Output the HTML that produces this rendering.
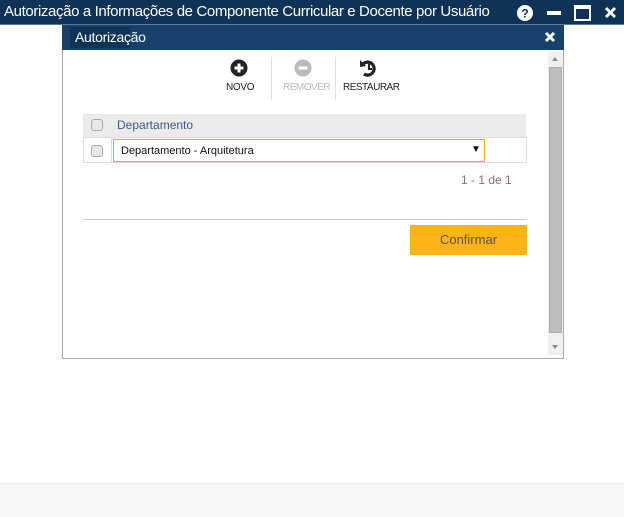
<!DOCTYPE html>
<html><head><meta charset="utf-8"><style>
*{margin:0;padding:0;box-sizing:border-box}
body{width:624px;height:517px;position:relative;background:#fff;font-family:"Liberation Sans",sans-serif;overflow:hidden}
.a{position:absolute}
</style></head><body>
<div class="a" style="left:0;top:0;width:624px;height:25px;background:#0f3357;border-bottom:1px solid #5b7a99"></div>
<div class="a" style="left:4px;top:3px;color:#fff;font-size:15px;letter-spacing:-0.38px">Autorização a Informações de Componente Curricular e Docente por Usuário</div>
<svg class="a" style="left:514px;top:4px" width="110" height="18">
<circle cx="11" cy="9" r="8" fill="#fff"/><text x="11" y="13.5" font-size="12" font-weight="bold" fill="#0f3357" text-anchor="middle" font-family="Liberation Sans">?</text>
<rect x="33" y="7" width="14" height="4" fill="#fff"/>
<rect x="61" y="2" width="15" height="14" fill="none" stroke="#fff" stroke-width="2"/><rect x="61" y="2" width="15" height="3" fill="#fff"/>
<path d="M92 4 L101 13 M101 4 L92 13" stroke="#fff" stroke-width="3"/>
</svg>
<div class="a" style="left:62px;top:25px;width:502px;height:334px;border:1px solid #aaa;background:#fff"></div>
<div class="a" style="left:62px;top:25px;width:502px;height:25px;background:#17406b"></div>
<div class="a" style="left:70px;top:27px;width:60px;height:21px;background:#0f3357"></div>
<div class="a" style="left:75px;top:29px;color:#fff;font-size:14px;letter-spacing:-0.3px">Autorização</div>
<svg class="a" style="left:544px;top:31px" width="12" height="12"><path d="M2 2 L10 10 M10 2 L2 10" stroke="#fff" stroke-width="3"/></svg>
<div class="a" style="left:548px;top:52px;width:15px;height:303px;background:#f0f0f0"></div>
<div class="a" style="left:549px;top:67px;width:13px;height:266px;background:#bdbdbd;border:1px solid #aaa"></div>
<svg class="a" style="left:550px;top:55px" width="10" height="300"><path d="M2 6 L8 6 L5 2Z M2 290 L8 290 L5 294Z" fill="#888"/></svg>
<svg class="a" style="left:229px;top:58px" width="160" height="22">
<circle cx="10" cy="10" r="8.5" fill="#222"/><path d="M10 5.5V14.5M5.5 10H14.5" stroke="#fff" stroke-width="3"/>
<circle cx="74" cy="10" r="8.5" fill="#bbb"/><path d="M69.5 10H78.5" stroke="#fff" stroke-width="3"/>
<path d="M134 6 A6.5 6.5 0 1 1 135 16" fill="none" stroke="#222" stroke-width="3.2"/><path d="M131 2 L137 8 L131 9Z" fill="#222"/><path d="M140 6V11H143" fill="none" stroke="#222" stroke-width="2"/>
</svg>
<div class="a" style="left:271px;top:57px;width:1px;height:43px;background:#ddd"></div>
<div class="a" style="left:335px;top:57px;width:1px;height:43px;background:#ddd"></div>
<div class="a" style="left:226px;top:82px;font-size:10px;color:#222;letter-spacing:-0.3px">NOVO</div>
<div class="a" style="left:283px;top:82px;font-size:10px;color:#bbb;letter-spacing:-0.5px">REMOVER</div>
<div class="a" style="left:343px;top:82px;font-size:10px;color:#222;letter-spacing:-0.5px">RESTAURAR</div>
<div class="a" style="left:83px;top:114px;width:443px;height:23px;background:#ebebeb"></div>
<div class="a" style="left:91px;top:119px;width:12px;height:12px;border:1px solid #aaa;border-radius:3px;background:#e8e8e8"></div>
<div class="a" style="left:117px;top:118px;font-size:12px;color:#3d5a8a">Departamento</div>
<div class="a" style="left:83px;top:137px;width:444px;height:26px;border:1px solid #ddd"></div>
<div class="a" style="left:111px;top:138px;width:1px;height:25px;background:#ddd"></div>
<div class="a" style="left:91px;top:145px;width:12px;height:12px;border:1px solid #aaa;border-radius:3px;background:#e8e8e8"></div>
<div class="a" style="left:113px;top:139px;width:372px;height:23px;border:1px solid #f5a700;background:#fff"></div>
<div class="a" style="left:121px;top:145px;font-size:11px;color:#111">Departamento - Arquitetura</div>
<div class="a" style="left:471px;top:144px;font-size:10px;color:#111">▼</div>
<div class="a" style="left:461px;top:173px;font-size:12px;color:#8a6e6e">1 - 1 de 1</div>
<div class="a" style="left:83px;top:219px;width:444px;height:1px;background:#ccc"></div>
<div class="a" style="left:410px;top:225px;width:117px;height:30px;background:#fdb414;color:#555;font-size:13px;text-align:center;line-height:30px">Confirmar</div>
<div class="a" style="left:0;top:483px;width:624px;height:34px;background:#f6f6f6;border-top:1px solid #e8e8e8"></div>
</body></html>
